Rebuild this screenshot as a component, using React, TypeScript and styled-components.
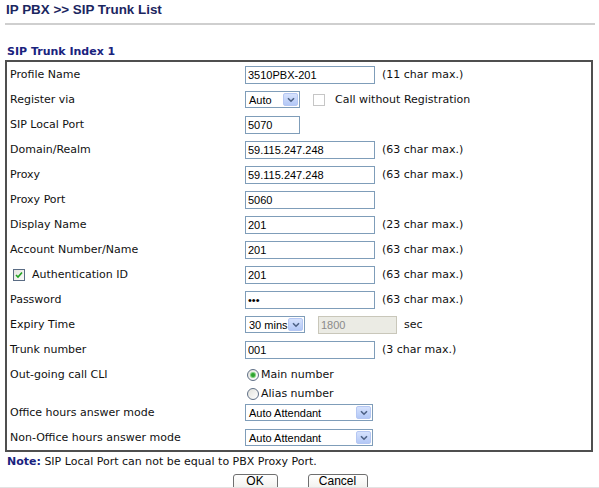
import styled, { createGlobalStyle } from "styled-components";

const GlobalStyle = createGlobalStyle`
  html, body {
    margin: 0;
    padding: 0;
    background: #fff;
  }
  body {
    font-family: "DejaVu Sans", Verdana, sans-serif;
    font-size: 11px;
    color: #111;
  }
`;

const Page = styled.div`
  width: 599px;
  height: 488px;
  overflow: hidden;
  box-sizing: border-box;
  padding: 2px 4px 0 5px;
  display: flex;
  flex-direction: column;
`;

const Title = styled.h1`
  margin: 0;
  padding-left: 1px;
  font-family: "Liberation Sans", Arial, sans-serif;
  font-size: 13.4px;
  font-weight: bold;
  line-height: 16px;
  color: #1b2660;
`;

const TitleRule = styled.div`
  margin-top: 5px;
  height: 2px;
  background: #cfcfcf;
`;

const SectionHeading = styled.h2`
  margin: 20px 0 2px;
  padding-left: 2px;
  font-size: 11px;
  font-weight: bold;
  line-height: 13px;
  color: #1a237e;
`;

const Box = styled.div`
  margin-right: 2px;
  border: 2px solid #4f4f4f;
  display: flex;
  flex-direction: column;
`;

const Row = styled.div<{ $tall?: boolean }>`
  display: grid;
  grid-template-columns: 238px 1fr;
  height: ${({ $tall }) => ($tall ? 38 : 25)}px;
  align-items: ${({ $tall }) => ($tall ? "start" : "center")};
`;

const Label = styled.div<{ $top?: boolean }>`
  padding-left: 3px;
  padding-top: ${({ $top }) => ($top ? 6 : 0)}px;
  line-height: 13px;
  display: flex;
  align-items: center;
  gap: 7px;
`;

const Field = styled.div`
  display: flex;
  align-items: center;
`;

const TextInput = styled.input<{ $w: number }>`
  width: ${({ $w }) => $w}px;
  height: 18px;
  box-sizing: border-box;
  margin: 0;
  padding: 0 2px;
  border: 1px solid #7f9db9;
  font-family: "Liberation Sans", Arial, sans-serif;
  font-size: 11px;
  color: #000;
  background: #fff;
  outline: none;

  &:disabled {
    background: #ebebe4;
    color: #8a8a8a;
    border-color: #c9c7ba;
  }
`;

const Hint = styled.span<{ $gap?: number }>`
  margin-left: ${({ $gap }) => $gap ?? 7}px;
  white-space: nowrap;
`;

const SelectBox = styled.div<{ $w: number }>`
  width: ${({ $w }) => $w}px;
  height: 17px;
  box-sizing: border-box;
  border: 1px solid #7f9db9;
  background: #fff;
  display: flex;
  align-items: center;
  justify-content: space-between;
  padding: 0 1px 0 3px;
  font-family: "Liberation Sans", Arial, sans-serif;
  font-size: 11px;
  color: #000;
`;

const SelectArrow = styled.span`
  width: 15px;
  height: 13px;
  box-sizing: border-box;
  border: 1px solid #b5c7f3;
  border-radius: 2px;
  background: linear-gradient(#d6e2fd, #b3c8f6);
  display: flex;
  align-items: center;
  justify-content: center;
`;

const Check = styled.span<{ $disabled?: boolean }>`
  width: 12px;
  height: 12px;
  box-sizing: border-box;
  border: 1px solid ${({ $disabled }) => ($disabled ? "#c6c6c6" : "#5a6c84")};
  background: ${({ $disabled }) => ($disabled ? "#fff" : "linear-gradient(135deg, #e4e4df, #fbfbfa)")};
  display: inline-flex;
  align-items: center;
  justify-content: center;
  flex: none;
`;

const CheckSlot = styled.span`
  margin-left: 3px;
  display: inline-flex;
`;

const CheckText = styled.span`
  margin-left: 10px;
`;

const RadioGroup = styled.div`
  padding-top: 3px;
  display: flex;
  flex-direction: column;
`;

const RadioItem = styled.div`
  height: 19px;
  display: flex;
  align-items: center;
  padding-left: 2px;
`;

const Radio = styled.span<{ $on?: boolean }>`
  width: 12px;
  height: 12px;
  box-sizing: border-box;
  border-radius: 50%;
  border: 1px solid #5f6f86;
  background: linear-gradient(135deg, #e2e2dc, #ffffff);
  display: inline-flex;
  align-items: center;
  justify-content: center;
  margin-right: 2px;

  &::after {
    content: "";
    width: 4px;
    height: 4px;
    border-radius: 50%;
    background: ${({ $on }) => ($on ? "#2fa12f" : "transparent")};
    box-shadow: ${({ $on }) => ($on ? "0 0 0 1px #7cd27c" : "none")};
  }
`;

const Note = styled.div`
  margin-top: 3px;
  padding-left: 2px;
  line-height: 13px;
  color: #111;

  b {
    color: #1a237e;
  }
`;

const ButtonRow = styled.div`
  margin-top: 6px;
  height: 13px;
  display: flex;
  justify-content: center;
  gap: 30px;
  overflow: hidden;
`;

const Button = styled.button<{ $w: number }>`
  width: ${({ $w }) => $w}px;
  height: 21px;
  flex: none;
  margin: 0;
  padding: 0;
  border: 1px solid #6f6f6f;
  border-radius: 3px;
  background: linear-gradient(#ffffff, #ecebe6);
  font-family: "Liberation Sans", Arial, sans-serif;
  font-size: 12px;
  line-height: 13px;
  color: #000;
  display: flex;
  justify-content: center;
  align-items: flex-start;
`;

const FooterRule = styled.div`
  height: 1px;
  margin: 0 -4px 0 -5px;
  background: #e3e3e3;
`;

const Chevron = () => (
  <svg width="8" height="6" viewBox="0 0 8 6">
    <path d="M1 1.2 L4 4.2 L7 1.2" fill="none" stroke="#4d6185" strokeWidth="1.6" />
  </svg>
);

const Tick = () => (
  <svg width="8" height="8" viewBox="0 0 8 8">
    <path d="M1 4 L3 6 L7 1.5" fill="none" stroke="#21a121" strokeWidth="1.6" />
  </svg>
);

const Select = ({ value, width }: { value: string; width: number }) => (
  <SelectBox $w={width}>
    <span>{value}</span>
    <SelectArrow>
      <Chevron />
    </SelectArrow>
  </SelectBox>
);

type Line = { label: string; value: string; width: number; hint?: string };

const textLines: Line[] = [
  { label: "Domain/Realm", value: "59.115.247.248", width: 130, hint: "(63 char max.)" },
  { label: "Proxy", value: "59.115.247.248", width: 130, hint: "(63 char max.)" },
  { label: "Proxy Port", value: "5060", width: 130 },
  { label: "Display Name", value: "201", width: 130, hint: "(23 char max.)" },
  { label: "Account Number/Name", value: "201", width: 130, hint: "(63 char max.)" },
];

const App = () => {
  return (
    <>
      <GlobalStyle />
      <Page>
        <Title>IP PBX &gt;&gt; SIP Trunk List</Title>
        <TitleRule />
        <SectionHeading>SIP Trunk Index 1</SectionHeading>
        <Box>
          <Row>
            <Label>Profile Name</Label>
            <Field>
              <TextInput $w={130} defaultValue="3510PBX-201" />
              <Hint>(11 char max.)</Hint>
            </Field>
          </Row>
          <Row>
            <Label>Register via</Label>
            <Field>
              <Select value="Auto" width={55} />
              <Hint $gap={13}>
                <Field>
                  <Check $disabled />
                  <CheckText>Call without Registration</CheckText>
                </Field>
              </Hint>
            </Field>
          </Row>
          <Row>
            <Label>SIP Local Port</Label>
            <Field>
              <TextInput $w={55} defaultValue="5070" />
            </Field>
          </Row>
          {textLines.map((line) => (
            <Row key={line.label}>
              <Label>{line.label}</Label>
              <Field>
                <TextInput $w={line.width} defaultValue={line.value} />
                {line.hint && <Hint>{line.hint}</Hint>}
              </Field>
            </Row>
          ))}
          <Row>
            <Label>
              <CheckSlot>
                <Check>
                  <Tick />
                </Check>
              </CheckSlot>
              Authentication ID
            </Label>
            <Field>
              <TextInput $w={130} defaultValue="201" />
              <Hint>(63 char max.)</Hint>
            </Field>
          </Row>
          <Row>
            <Label>Password</Label>
            <Field>
              <TextInput $w={130} type="password" defaultValue="abc" />
              <Hint>(63 char max.)</Hint>
            </Field>
          </Row>
          <Row>
            <Label>Expiry Time</Label>
            <Field>
              <Select value="30 mins" width={60} />
              <Hint $gap={13}>
                <TextInput $w={79} defaultValue="1800" disabled />
              </Hint>
              <Hint>sec</Hint>
            </Field>
          </Row>
          <Row>
            <Label>Trunk number</Label>
            <Field>
              <TextInput $w={130} defaultValue="001" />
              <Hint>(3 char max.)</Hint>
            </Field>
          </Row>
          <Row $tall>
            <Label $top>Out-going call CLI</Label>
            <RadioGroup>
              <RadioItem>
                <Radio $on />
                Main number
              </RadioItem>
              <RadioItem>
                <Radio />
                Alias number
              </RadioItem>
            </RadioGroup>
          </Row>
          <Row>
            <Label>Office hours answer mode</Label>
            <Field>
              <Select value="Auto Attendant" width={128} />
            </Field>
          </Row>
          <Row>
            <Label>Non-Office hours answer mode</Label>
            <Field>
              <Select value="Auto Attendant" width={128} />
            </Field>
          </Row>
        </Box>
        <Note>
          <b>Note:</b> SIP Local Port can not be equal to PBX Proxy Port.
        </Note>
        <ButtonRow>
          <Button $w={45}>OK</Button>
          <Button $w={60}>Cancel</Button>
        </ButtonRow>
        <FooterRule />
      </Page>
    </>
  );
};

export default App;
